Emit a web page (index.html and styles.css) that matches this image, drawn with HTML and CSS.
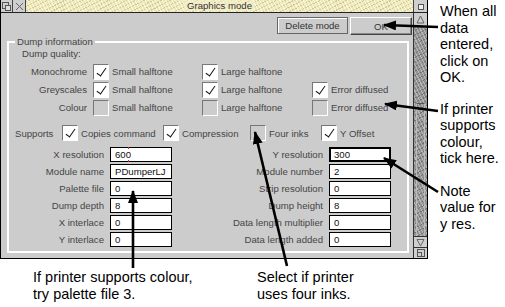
FILE: index.html
```html
<!DOCTYPE html>
<html lang="en">
<head>
    <meta charset="UTF-8">
    <title>Graphics mode</title>
    <link rel="stylesheet" href="styles.css">
</head>
<body>
    <div class="page">
        <div class="left">
            <div class="window">
                <div class="titlebar">
                    <span class="tool back">
                        <svg width="11" height="11" viewBox="0 0 11 11"><rect x="1.5" y="1.5" width="6" height="6" fill="none" stroke="#555"/><rect x="4.5" y="4.5" width="5" height="5" fill="#ddd" stroke="#555"/></svg>
                    </span>
                    <span class="tool close">
                        <svg width="11" height="11" viewBox="0 0 11 11"><path d="M2 2 L9 9 M9 2 L2 9" stroke="#666" stroke-width="1"/></svg>
                    </span>
                    <div class="title"><span>Graphics mode</span></div>
                    <span class="tool toggle">
                        <svg width="12" height="11" viewBox="0 0 12 11"><rect x="3.5" y="3.5" width="5" height="5" fill="#eee" stroke="#555"/></svg>
                    </span>
                </div>
                <div class="work">
                    <div class="actions">
                        <button class="btn btn-delete" type="button">Delete mode</button>
                        <button class="btn btn-ok" type="button">OK</button>
                    </div>
                    <fieldset class="group">
                        <legend>Dump information</legend>
                        <div class="quality-head">Dump quality:</div>
                        <div class="quality">
                            <span class="lbl">Monochrome</span>
                            <span class="opt"><i class="box on"></i>Small halftone</span>
                            <span class="opt"><i class="box on"></i>Large halftone</span>
                            <span></span>

                            <span class="lbl">Greyscales</span>
                            <span class="opt"><i class="box on"></i>Small halftone</span>
                            <span class="opt"><i class="box on"></i>Large halftone</span>
                            <span class="opt"><i class="box on"></i>Error diffused</span>

                            <span class="lbl">Colour</span>
                            <span class="opt"><i class="box"></i>Small halftone</span>
                            <span class="opt"><i class="box"></i>Large halftone</span>
                            <span class="opt"><i class="box"></i>Error diffused</span>
                        </div>
                        <div class="supports">
                            <span class="lbl">Supports</span>
                            <span class="opt"><i class="box on"></i>Copies command</span>
                            <span class="opt"><i class="box on"></i>Compression</span>
                            <span class="opt"><i class="box"></i>Four inks</span>
                            <span class="opt"><i class="box on"></i>Y Offset</span>
                        </div>
                        <div class="fields">
                            <span class="lbl">X resolution</span>
                            <span class="field">600<i class="caret"></i></span>
                            <span class="lbl">Y resolution</span>
                            <span class="field strong">300</span>

                            <span class="lbl">Module name</span>
                            <span class="field">PDumperLJ</span>
                            <span class="lbl">Module number</span>
                            <span class="field">2</span>

                            <span class="lbl">Palette file</span>
                            <span class="field">0</span>
                            <span class="lbl">Strip resolution</span>
                            <span class="field">0</span>

                            <span class="lbl">Dump depth</span>
                            <span class="field">8</span>
                            <span class="lbl">Dump height</span>
                            <span class="field">8</span>

                            <span class="lbl">X interlace</span>
                            <span class="field">0</span>
                            <span class="lbl">Data length multiplier</span>
                            <span class="field">0</span>

                            <span class="lbl">Y interlace</span>
                            <span class="field">0</span>
                            <span class="lbl">Data length added</span>
                            <span class="field">0</span>
                        </div>
                    </fieldset>
                </div>
                <div class="scroll">
                    <span class="sc-btn up">
                        <svg width="13" height="13" viewBox="0 0 13 13"><path d="M6.5 3 L10 10 L3 10 Z" fill="none" stroke="#666"/></svg>
                    </span>
                    <span class="track"><span class="slider"></span></span>
                    <span class="sc-btn down">
                        <svg width="13" height="11" viewBox="0 0 13 11"><path d="M3 2.5 L10 2.5 L6.5 9 Z" fill="none" stroke="#666"/></svg>
                    </span>
                    <span class="sc-btn resize">
                        <svg width="13" height="10" viewBox="0 0 13 10"><rect x="3.5" y="1.5" width="7" height="7" fill="none" stroke="#555"/><rect x="3.5" y="4.5" width="4" height="4" fill="none" stroke="#555"/></svg>
                    </span>
                </div>
            </div>
            <div class="notes-bottom">
                <p class="note note-palette">If printer supports colour,<br>try palette file 3.</p>
                <p class="note note-inks">Select if printer<br>uses four inks.</p>
            </div>
        </div>
        <div class="notes-right">
            <p class="note">When all<br>data<br>entered,<br>click on<br>OK.</p>
            <p class="note">If printer<br>supports<br>colour,<br>tick here.</p>
            <p class="note">Note<br>value for<br>y res.</p>
        </div>

        <!-- callout arrows drawn over the screenshot -->
        <svg class="arrows" width="505" height="307" viewBox="0 0 505 307">
            <defs>
                <marker id="head" markerUnits="userSpaceOnUse" markerWidth="13" markerHeight="10" refX="12" refY="5" orient="auto">
                    <path d="M0 0 L13 5 L0 10 Z" fill="#000"/>
                </marker>
            </defs>
            <g stroke="#000" stroke-width="2.6" fill="none" marker-end="url(#head)">
                <line x1="438" y1="27" x2="384" y2="25"/>
                <line x1="438" y1="111" x2="385" y2="104"/>
                <line x1="438" y1="192" x2="384" y2="158"/>
                <line x1="133" y1="268" x2="133" y2="191"/>
                <line x1="287" y1="266" x2="255" y2="132"/>
            </g>
        </svg>
    </div>
</body>
</html>
```

FILE: styles.css
```css
* {
  box-sizing: border-box;
}

body {
  margin: 0;
  background: #fff;
  font-family: "Liberation Sans", Arial, sans-serif;
}

.page {
  position: relative;
  display: flex;
  width: 505px;
  height: 307px;
  overflow: hidden;
}

.left {
  flex: none;
  width: 428px;
}

/* window */

.window {
  display: grid;
  grid-template-columns: 412px 14px;
  grid-template-rows: 13px 245px;
  width: 428px;
  height: 259px;
  border: 1px solid #000;
  border-top: 0;
}

.titlebar {
  grid-column: 1 / 3;
  display: flex;
  border-bottom: 1px solid #222;
}

.tool {
  display: flex;
  align-items: center;
  justify-content: center;
  height: 12px;
  background: #cfcfcf;
  border-right: 1px solid #444;
}

.back {
  width: 12px;
}

.close {
  width: 13px;
}

.toggle {
  width: 14px;
  border-right: 0;
  border-left: 1px solid #444;
}

.title {
  flex: 1;
  text-align: center;
  font-size: 9.6px;
  line-height: 12px;
  color: #333;
  background-color: #efe8b4;
  background-image:
    repeating-linear-gradient(63deg, rgba(255, 255, 255, 0.6) 0 1px, transparent 1px 3px),
    repeating-linear-gradient(-27deg, rgba(140, 130, 80, 0.3) 0 1px, transparent 1px 4px);
}

.title span {
  padding: 0 3px;
  background: rgba(245, 240, 205, 0.6);
}

.work {
  background: #cccccc;
  padding-top: 4px;
  font-size: 9.6px;
  color: #454545;
}

.actions {
  display: flex;
  justify-content: flex-end;
  gap: 2px;
  height: 18px;
  padding-right: 1px;
}

.btn {
  height: 17px;
  padding: 0;
  font: inherit;
  color: #333;
  background: #cccccc;
  border: 1px solid #666;
  box-shadow: inset 1px 1px 0 #fff;
}

.btn-delete {
  width: 71px;
}

.btn-ok {
  width: 62px;
  height: 18px;
  border-color: #fff #444 #444 #fff;
  box-shadow: inset -1px -1px 0 #888;
}

/* Dump information group */

.group {
  margin: 1px 4px 0 6px;
  padding: 0 0 4px;
  border: 2px solid #fff;
  min-width: 0;
}

.group legend {
  margin-left: 6px;
  padding: 0 2px;
  line-height: 12px;
}

.quality-head {
  padding-left: 13px;
  line-height: 12px;
}

.lbl {
  white-space: nowrap;
}

.opt {
  display: flex;
  align-items: center;
  gap: 3px;
  white-space: nowrap;
}

.box {
  position: relative;
  flex: none;
  width: 16px;
  height: 16px;
  background: #cccccc;
  border: 1px solid;
  border-color: #777 #fff #fff #777;
}

.box.on {
  background: #fff;
}

.box.on::after {
  content: "";
  position: absolute;
  left: 5px;
  top: 1px;
  width: 4px;
  height: 9px;
  border: solid #111;
  border-width: 0 1.5px 1.5px 0;
  transform: rotate(35deg);
}

.quality {
  display: grid;
  grid-template-columns: 84px 109px 110px 1fr;
  grid-auto-rows: 17px;
  row-gap: 1px;
  align-items: center;
  margin-top: 3px;
}

.quality .lbl {
  text-align: right;
  padding-right: 6px;
}

.supports {
  display: grid;
  grid-template-columns: 53px 101px 87px 71px 1fr;
  align-items: center;
  height: 16px;
  margin-top: 9px;
}

.supports .lbl {
  padding-left: 6px;
}

.fields {
  display: grid;
  grid-template-columns: 101px 62px 157px 62px;
  grid-auto-rows: 15px;
  row-gap: 2px;
  align-items: center;
  margin-top: 6px;
}

.fields .lbl {
  text-align: right;
  padding-right: 6px;
}

.field {
  position: relative;
  height: 15px;
  padding-left: 4px;
  line-height: 13px;
  color: #111;
  background: #fff;
  border: 1px solid #000;
}

.field.strong {
  border-width: 2px;
  line-height: 11px;
  padding-left: 3px;
}

.caret {
  position: absolute;
  left: 17px;
  top: -1px;
  width: 1px;
  height: 15px;
  border-top: 2px solid #d22;
  border-bottom: 2px solid #d22;
}

/* scroll bar */

.scroll {
  display: flex;
  flex-direction: column;
  border-left: 1px solid #333;
}

.sc-btn {
  display: flex;
  align-items: center;
  justify-content: center;
  background: #cfcfcf;
}

.up {
  height: 14px;
  border-bottom: 1px solid #333;
}

.down {
  height: 12px;
  border-top: 1px solid #333;
  border-bottom: 1px solid #333;
}

.resize {
  height: 10px;
}

.track {
  flex: 1;
  padding-top: 76px;
  background-color: #939393;
  background-image:
    repeating-linear-gradient(63deg, rgba(255, 255, 255, 0.35) 0 1px, transparent 1px 3px),
    repeating-linear-gradient(-27deg, rgba(0, 0, 0, 0.22) 0 1px, transparent 1px 4px);
}

.slider {
  display: block;
  height: 100%;
  margin: 0 2px;
  border-top: 1px solid #555;
  border-left: 1px solid #bbb;
  border-right: 1px solid #bbb;
}

/* annotations */

.note {
  margin: 0;
  font-size: 14.5px;
  line-height: 16.5px;
  color: #000;
}

.notes-right {
  padding-left: 12px;
}

.notes-right .note {
  margin-top: 15px;
}

.notes-right .note:first-child {
  margin-top: 3px;
}

.notes-right .note:last-child {
  margin-top: 16px;
}

.notes-bottom {
  display: flex;
  padding-top: 10px;
}

.note-palette {
  width: 224px;
  margin-left: 33px;
}

.arrows {
  position: absolute;
  top: 0;
  left: 0;
  pointer-events: none;
}
```
